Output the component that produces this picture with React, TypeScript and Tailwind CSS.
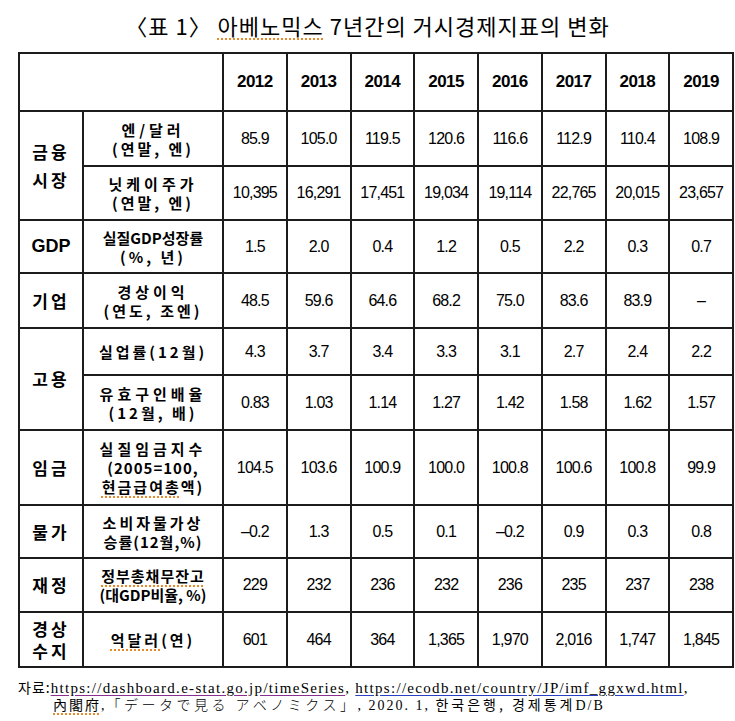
import { ReactNode } from "react";

const years = ["2012", "2013", "2014", "2015", "2016", "2017", "2018", "2019"];

const kr = "font-['Noto_Sans_CJK_KR','Noto_Sans',sans-serif]";
const num = "font-['Liberation_Sans',Arial,sans-serif]";

// spell-check style dotted underline seen in the source document
function Sp({ children }: { children: ReactNode }) {
  return (
    <span className="underline decoration-dotted decoration-[#e8892b] decoration-[1.5px] underline-offset-[3px]">
      {children}
    </span>
  );
}

interface Row {
  cat?: { lines: string[]; span: number; gap: string };
  label: ReactNode;
  h: string;
  vals: string[];
}

const rows: Row[] = [
  {
    cat: { lines: ["금융", "시장"], span: 2, gap: "leading-[28px]" },
    label: (
      <>
        <div className="tracking-[4px]">엔/달러</div>
        <div className="tracking-[3px]">(연말, 엔)</div>
      </>
    ),
    h: "h-[55px]",
    vals: ["85.9", "105.0", "119.5", "120.6", "116.6", "112.9", "110.4", "108.9"],
  },
  {
    label: (
      <>
        <div className="tracking-[4px]">닛케이주가</div>
        <div className="tracking-[3px]">(연말, 엔)</div>
      </>
    ),
    h: "h-[54px]",
    vals: ["10,395", "16,291", "17,451", "19,034", "19,114", "22,765", "20,015", "23,657"],
  },
  {
    cat: { lines: ["GDP"], span: 1, gap: "" },
    label: (
      <>
        <div className="tracking-[0px]">실질GDP성장률</div>
        <div className="tracking-[3px]">(%, 년)</div>
      </>
    ),
    h: "h-[53px]",
    vals: ["1.5", "2.0", "0.4", "1.2", "0.5", "2.2", "0.3", "0.7"],
  },
  {
    cat: { lines: ["기업"], span: 1, gap: "" },
    label: (
      <>
        <div className="tracking-[4px]">경상이익</div>
        <div className="tracking-[3px]">(연도, 조엔)</div>
      </>
    ),
    h: "h-[55px]",
    vals: ["48.5", "59.6", "64.6", "68.2", "75.0", "83.6", "83.9", "–"],
  },
  {
    cat: { lines: ["고용"], span: 2, gap: "" },
    label: <div className="tracking-[3px]">실업률(12월)</div>,
    h: "h-[47px]",
    vals: ["4.3", "3.7", "3.4", "3.3", "3.1", "2.7", "2.4", "2.2"],
  },
  {
    label: (
      <>
        <div className="tracking-[4px]">유효구인배율</div>
        <div className="tracking-[3px]">(12월, 배)</div>
      </>
    ),
    h: "h-[55px]",
    vals: ["0.83", "1.03", "1.14", "1.27", "1.42", "1.58", "1.62", "1.57"],
  },
  {
    cat: { lines: ["임금"], span: 1, gap: "" },
    label: (
      <>
        <div className="tracking-[4px]">실질임금지수</div>
        <div className="tracking-[1px]">(2005=100,</div>
        <div className="tracking-[2px]">
          <Sp>현금급여총</Sp>액)
        </div>
      </>
    ),
    h: "h-[75px]",
    vals: ["104.5", "103.6", "100.9", "100.0", "100.8", "100.6", "100.8", "99.9"],
  },
  {
    cat: { lines: ["물가"], span: 1, gap: "" },
    label: (
      <>
        <div className="tracking-[3px]">소비자물가상</div>
        <div className="tracking-[1px]">승률(12월,%)</div>
      </>
    ),
    h: "h-[53px]",
    vals: ["–0.2", "1.3", "0.5", "0.1", "–0.2", "0.9", "0.3", "0.8"],
  },
  {
    cat: { lines: ["재정"], span: 1, gap: "" },
    label: (
      <>
        <div className="tracking-[1px]">
          <Sp>정부총채무잔고</Sp>
        </div>
        <div className="tracking-[0px]">(대GDP비율, %)</div>
      </>
    ),
    h: "h-[54px]",
    vals: ["229", "232", "236", "232", "236", "235", "237", "238"],
  },
  {
    cat: { lines: ["경상", "수지"], span: 1, gap: "leading-[22px] text-[16px]" },
    label: (
      <div className="tracking-[3px]">
        <Sp>억달러</Sp>(연)
      </div>
    ),
    h: "h-[55px]",
    vals: ["601", "464", "364", "1,365", "1,970", "2,016", "1,747", "1,845"],
  },
];

const cell = "border-2 border-[#1c1c1c] text-center align-middle p-0";

export default function App() {
  return (
    <div className="w-[735px] h-[721px] bg-white text-black overflow-hidden">
      {/* title */}
      <div className={`pt-[10px] h-[52px] text-center text-[22px] leading-[30px] tracking-[1px] ${kr}`}>
        〈표 1〉 <Sp>아베노믹스</Sp> 7년간의 거시경제지표의 변화
      </div>

      <table className="ml-[18px] w-[714px] table-fixed border-collapse">
        <colgroup>
          <col className="w-[64px]" />
          <col className="w-[140px]" />
          {years.map((y) => (
            <col key={y} className="w-[63.75px]" />
          ))}
        </colgroup>
        <tbody>
          <tr className="h-[58px]">
            <td colSpan={2} className={cell} />
            {years.map((y) => (
              <td key={y} className={`${cell} ${num} font-bold text-[17px] tracking-[-0.5px]`}>
                {y}
              </td>
            ))}
          </tr>
          {rows.map((r, i) => (
            <tr key={i} className={r.h}>
              {r.cat && (
                <td
                  rowSpan={r.cat.span}
                  className={`${cell} ${r.cat.lines[0] === "GDP" ? "font-['Liberation_Sans',sans-serif] text-[18px]" : `${kr} text-[17px] tracking-[3px]`} font-bold ${r.cat.gap}`}
                >
                  {r.cat.lines.map((l) => (
                    <div key={l}>{l}</div>
                  ))}
                </td>
              )}
              <td className={`${cell} ${kr} font-bold text-[15px] leading-[19px]`}>{r.label}</td>
              {r.vals.map((v, j) => (
                <td key={j} className={`${cell} ${num} text-[16px] tracking-[-0.8px]`}>
                  {v}
                </td>
              ))}
            </tr>
          ))}
        </tbody>
      </table>

      {/* source notes */}
      <div className="pl-[18px] pt-[11px] text-[14px] leading-[16px]">
        <div className="whitespace-nowrap">
          <span className={`${kr} tracking-[1px]`}>자료:</span>
          <span className="font-['Liberation_Serif',serif] text-[15px] tracking-[1.3px]">
            <span className="underline decoration-[#8a2f8f] underline-offset-[2px]">
              https://dashboard.e-stat.go.jp/timeSeries
            </span>
            ,{"  "}
            <span className="underline decoration-[#2b3fc4] underline-offset-[2px]">
              https://ecodb.net/country/JP/imf_ggxwd.html
            </span>
            ,
          </span>
        </div>
        <div className="pl-[35px] whitespace-nowrap font-['Liberation_Serif','Noto_Sans_CJK_JP','Noto_Sans_CJK_KR',serif] text-[14px] tracking-[2px]">
          <Sp>內閣府</Sp>,
          <span className="font-['Noto_Sans_CJK_JP',sans-serif] font-light tracking-[3.5px]">「データで見る アベノミクス」</span>, 2020. 1,{" "}
          <span className={`${kr} tracking-[3px]`}>한국은행, 경제통계</span>D/B
        </div>
      </div>
    </div>
  );
}
